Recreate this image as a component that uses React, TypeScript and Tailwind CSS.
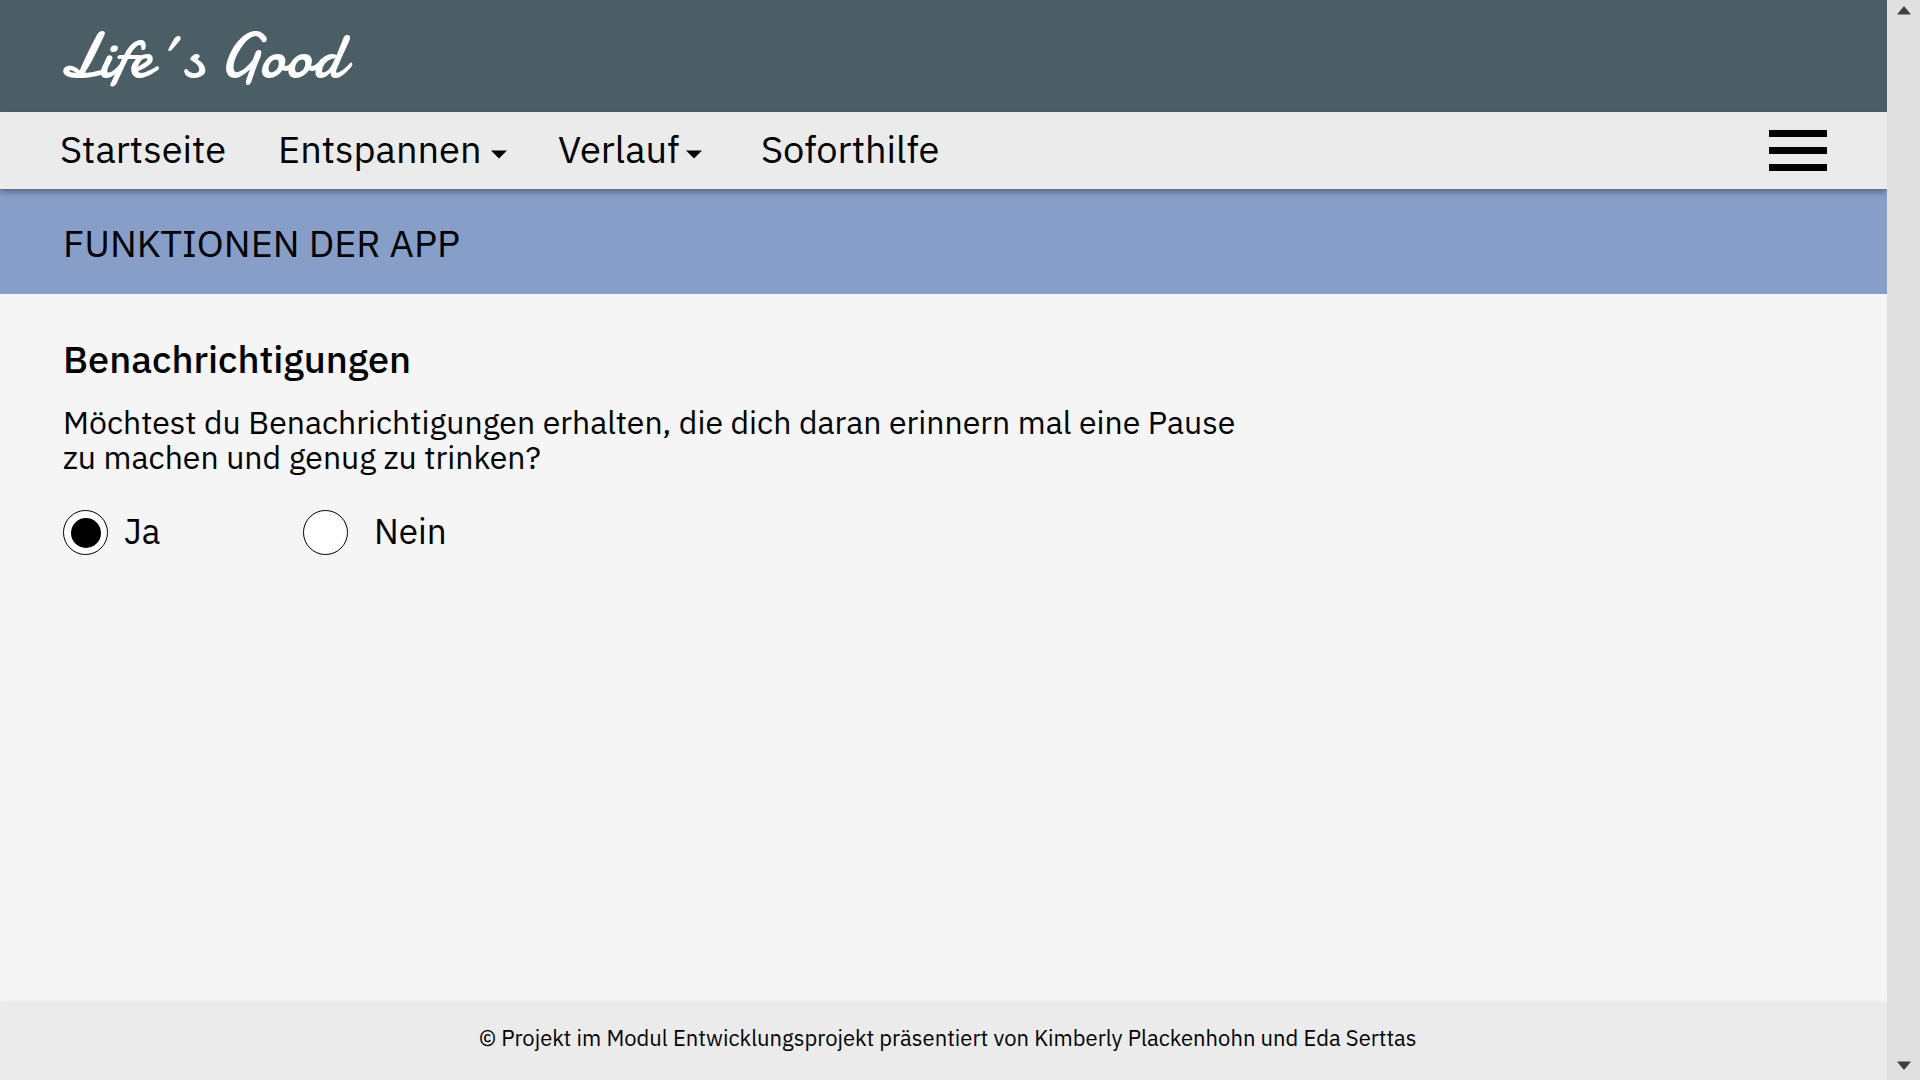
import React from "react";

function Caret() {
  return (
    <svg className="mt-2.5 h-[9px] w-4" viewBox="0 0 16 9" aria-hidden="true">
      <path d="M0 0.6H16L8 8.6Z" fill="#000" />
    </svg>
  );
}

function Radio({ checked }: { checked?: boolean }) {
  return (
    <svg className="size-[46px]" viewBox="0 0 46 46" role="radio" aria-checked={!!checked}>
      <circle cx="22.5" cy="22.5" r="22" fill="#fff" stroke="#000" strokeWidth="1" />
      {checked && <circle cx="23" cy="23" r="15" fill="#000" />}
    </svg>
  );
}

function Header() {
  return (
    <header className="h-28 shrink-0 bg-[#4c5e65] pl-[59px] pt-3 text-white">
      <div className="font-[Damion,cursive] text-[64px] leading-[88px]">Life´s Good</div>
    </header>
  );
}

function Nav() {
  return (
    <nav className="relative z-10 flex h-[77px] shrink-0 items-center bg-[#ebebeb] pb-[3px] pl-[60px] pr-[60px] text-[38px] leading-none shadow-[0_3px_6px_rgba(0,0,0,0.35)]">
      <a className="w-[218px]">Startseite</a>
      <a className="flex w-[280px] items-center">
        <span className="w-[213px]">Entspannen</span>
        <Caret />
      </a>
      <a className="flex w-[203px] items-center">
        <span className="w-[128px]">Verlauf</span>
        <Caret />
      </a>
      <a>Soforthilfe</a>
      <button className="ml-auto mt-[3px] flex w-[58px] flex-col gap-2.5" aria-label="Menü">
        <span className="h-[7px] bg-black" />
        <span className="h-[7px] bg-black" />
        <span className="h-[7px] bg-black" />
      </button>
    </nav>
  );
}

function ScrollBar() {
  return (
    <div className="flex w-[33px] shrink-0 flex-col justify-between bg-[#e0e0e0] pb-2.5 pl-[10px] pt-1.5">
      <svg className="h-[9px] w-[14px]" viewBox="0 0 14 9">
        <path d="M0 8.5L7 0L14 8.5Z" fill="#404040" />
      </svg>
      <svg className="h-[9px] w-[14px]" viewBox="0 0 14 9">
        <path d="M0 0.5H14L7 9Z" fill="#404040" />
      </svg>
    </div>
  );
}

export default function App() {
  return (
    <div className="flex h-[1080px] w-[1920px] overflow-hidden bg-[#f5f5f5] font-['IBM_Plex_Sans','Open_Sans',sans-serif] text-black">
      <div className="flex min-w-0 flex-1 flex-col overflow-hidden">
        <Header />
        <Nav />
        <div className="h-[105px] shrink-0 bg-[#869ec8] pl-[63px] pt-9">
          <h1 className="text-[38px] leading-[36px]">FUNKTIONEN DER APP</h1>
        </div>
        <main className="flex-1 pl-[63px] pt-[45px]">
          <h2 className="text-[38px] font-medium leading-[40px]">Benachrichtigungen</h2>
          <p className="mt-[26px] w-[1200px] text-[32px] leading-[35px]">
            Möchtest du Benachrichtigungen erhalten, die dich daran erinnern mal eine Pause
            <br />
            zu machen und genug zu trinken?
          </p>
          <div className="mt-[35px] flex h-[46px] text-[35px] leading-[43px]">
            <div className="flex w-[240px]">
              <Radio checked />
              <span className="ml-[15px]">Ja</span>
            </div>
            <div className="flex">
              <Radio />
              <span className="ml-[25px]">Nein</span>
            </div>
          </div>
        </main>
        <footer className="h-[77px] shrink-0 bg-[#ebebeb] pl-[479px] text-[22px] leading-[70px] shadow-[0_0_4px_rgba(0,0,0,0.1)]">
          © Projekt im Modul Entwicklungsprojekt präsentiert von Kimberly Plackenhohn und Eda Serttas
        </footer>
      </div>
      <ScrollBar />
    </div>
  );
}
